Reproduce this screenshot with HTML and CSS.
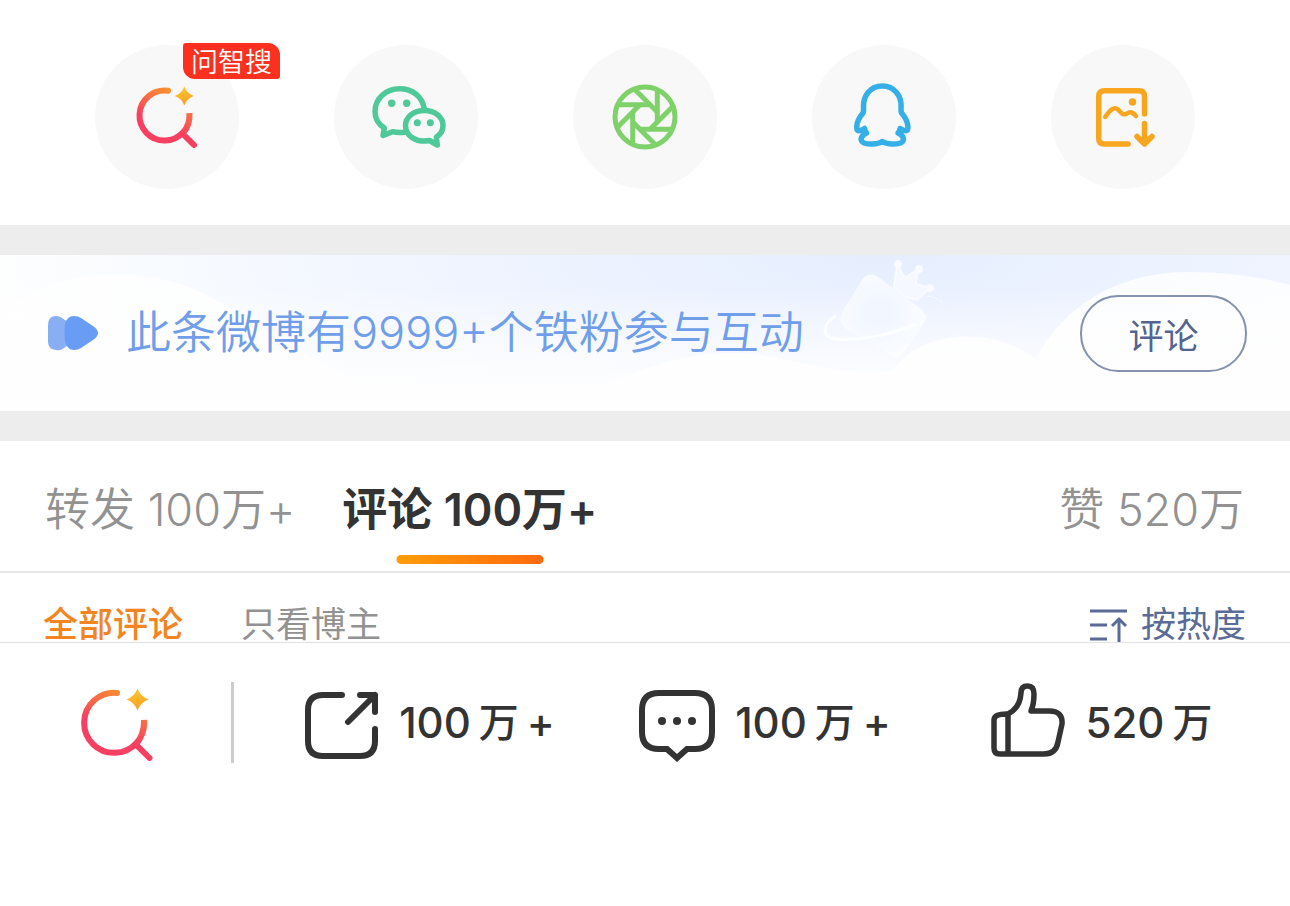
FILE: index.html
```html
<!DOCTYPE html>
<html lang="zh-CN">
<head>
<meta charset="utf-8">
<meta name="viewport" content="width=device-width, initial-scale=1">
<title>微博评论</title>
<link rel="stylesheet" href="styles.css">
</head>
<body>
<nav class="share" aria-label="分享">
  <button class="share-item" aria-label="问智搜">
    <svg viewBox="0 0 144 144" fill="none" stroke-width="6" stroke-linecap="round">
      <defs>
        <linearGradient id="ring" gradientUnits="userSpaceOnUse" x1="88" y1="46" x2="72" y2="82"><stop offset="0" stop-color="#fb9a2b"/><stop offset="1" stop-color="#f73f62"/></linearGradient>
        <linearGradient id="star" x1="0.3" y1="0" x2="0.6" y2="1"><stop offset="0" stop-color="#fcc92f"/><stop offset="1" stop-color="#f99d22"/></linearGradient>
      </defs>
      <path stroke="url(#ring)" d="M73 45.8A25 25 0 1 0 94.4 68.2C94.9 77 92.500 83.500 87.500 88.500L99 100"/>
      <path fill="url(#star)" d="M89.300 41.500Q91.800 48.500 98.800 51Q91.800 53.500 89.300 60.500Q86.800 53.500 79.800 51Q86.800 48.500 89.300 41.500Z"/>
    </svg>
    <span class="badge">问智搜</span>
  </button>
  <button class="share-item" aria-label="微信">
    <svg viewBox="0 0 144 144" fill="none" stroke="#4fc99a" stroke-width="5.500" stroke-linejoin="round" stroke-linecap="round">
      <path d="M71 87.200Q64 88.200 58.500 86.700L49 90.500L50.300 82.800C44 79 41 73 41 66.500C41 53.500 52 43.800 65.800 43.800C78.500 43.800 88 51.500 90.300 63.500"/>
      <path d="M90.300 65.500C101 65.500 109 72 109 80.500C109 85.500 106.500 89.500 102.300 92L103.300 100L95.500 95.500C82 98 71.500 91 71.500 80.500C71.500 72 79.500 65.500 90.300 65.500Z"/>
      <g fill="#4fc99a" stroke="none"><circle cx="57.700" cy="58.300" r="3.700"/><circle cx="72.700" cy="58.300" r="3.700"/><circle cx="83.300" cy="77.700" r="3.500"/><circle cx="96.300" cy="77.700" r="3.500"/></g>
    </svg>
  </button>
  <button class="share-item" aria-label="朋友圈">
    <svg viewBox="-72 -72 144 144" fill="none" stroke="#7fd169" stroke-width="5">
      <circle r="30"/>
      <path d="M-27-12.300H5.100"/><path d="M-27-12.300H5.100" transform="rotate(45)"/><path d="M-27-12.300H5.100" transform="rotate(90)"/><path d="M-27-12.300H5.100" transform="rotate(135)"/><path d="M-27-12.300H5.100" transform="rotate(180)"/><path d="M-27-12.300H5.100" transform="rotate(225)"/><path d="M-27-12.300H5.100" transform="rotate(270)"/><path d="M-27-12.300H5.100" transform="rotate(315)"/>
    </svg>
  </button>
  <button class="share-item" aria-label="QQ">
    <svg viewBox="0 0 144 144" fill="none" stroke="#35afe8" stroke-width="5.500" stroke-linejoin="round">
      <path d="M70.300 41C58 41 51.500 51 51.500 61C51.500 64 52 66 51 68C48 71.500 44.700 76 44.700 82C44.700 87 48 86.500 52.500 83.500Q53 86.500 54.500 88C49 90.500 48 94.500 50.500 97C54 100 66 99.500 70.300 96.500C74.600 99.500 86.600 100 90.100 97C92.600 94.500 91.600 90.500 86.100 88Q87.600 86.500 88.100 83.500C92.600 86.500 95.900 87 95.900 82C95.900 76 92.600 71.500 89.600 68C88.600 66 89.100 64 89.100 61C89.100 51 82.600 41 70.300 41Z"/>
    </svg>
  </button>
  <button class="share-item" aria-label="生成图片">
    <svg viewBox="0 0 144 144" fill="none" stroke="#f8a51f" stroke-width="5.500" stroke-linecap="round" stroke-linejoin="round">
      <path d="M93.500 69V51.500Q93.500 45.700 88 45.700H53.500Q47.700 45.700 47.700 51.500V93.200Q47.700 99 53.500 99H77"/>
      <path stroke-width="4.500" d="M54.200 72C59 65 63 61 67 64.500C71 69 72.500 70.500 76 68.500C79.500 66 82 67.500 85 71"/>
      <circle cx="81.500" cy="57" r="3.700" fill="#f8a51f" stroke="none"/>
      <path d="M93.500 78.500V98.500M86 91.500L93.500 99L101 91.500"/>
    </svg>
  </button>
</nav>

<section class="banner">
  <svg class="banner-art" viewBox="0 0 1290 156" preserveAspectRatio="xMidYMid slice" aria-hidden="true">
    <defs>
      <linearGradient id="cloud" gradientUnits="userSpaceOnUse" x1="0" y1="17" x2="0" y2="150"><stop offset="0" stop-color="#fff" stop-opacity="0.800"/><stop offset="1" stop-color="#fefefe"/></linearGradient>
      <radialGradient id="gem" cx="0.450" cy="0.450" r="0.550"><stop offset="0" stop-color="#f0f5ff"/><stop offset="0.500" stop-color="#f4f8ff"/><stop offset="1" stop-color="#fbfdff"/></radialGradient>
    </defs>
    <path fill="url(#cloud)" d="M0 60C50 12 150 8 210 42C280 82 350 130 420 156H0Z"/>
    <path fill="url(#cloud)" d="M560 156C620 118 680 98 730 98C790 98 820 122 892 116C925 70 1000 74 1036 104C1070 40 1130 17 1190 17C1230 17 1265 23 1290 30V156Z"/>
    <g stroke="#f8fbff" stroke-linejoin="round">
      <path fill="#f5f8ff" stroke-width="2" d="M894 32L897 9L905 23L918 14L916 29L930 33L917 45L906 42Z"/>
      <g fill="#f9fbff" stroke="none"><circle cx="898" cy="9" r="4"/><circle cx="919" cy="14" r="4"/><circle cx="930" cy="33" r="4"/></g>
      <path fill="url(#gem)" stroke="none" d="M862 25Q869 16 878 22L921 54Q929 60 924 68L904 97Q898 106 889 99L846 74Q837 67 842 57Z"/>
      <path fill="none" stroke="#fdfeff" stroke-width="3" d="M836 61C823 67 821 83 835 84C860 86 890 80 916 69"/>
      <path fill="none" stroke-width="1" d="M927 41Q940 42 943 50"/>
    </g>
  </svg>
  <svg class="fan-icon" viewBox="0 0 52 36" aria-hidden="true">
    <path fill="#8aaef4" d="M1 10Q1 1 9 1Q13 1 18 5L27 11V26L17 33Q13 36 9 35Q1 34 1 27Z"/>
    <path fill="#699cf5" d="M18 9Q20 1 27 1Q31 1 34 3L46 11Q56 18 46 25L34 33Q31 35 27 35Q20 35 18 26Q17 18 18 9Z"/>
  </svg>
  <p class="banner-text">此条微博有9999+个铁粉参与互动</p>
  <button class="comment-button">评论</button>
</section>

<nav class="tabs" aria-label="互动">
  <button class="tab">转发 100万+</button>
  <button class="tab tab-active">评论 100万+</button>
  <button class="tab tab-likes">赞 520万</button>
</nav>

<div class="filters">
  <button class="filter filter-active">全部评论</button>
  <button class="filter">只看博主</button>
  <button class="filter filter-sort">
    <svg class="sort-icon" viewBox="0 0 38 36" fill="none" stroke="#5a6b97" stroke-width="3" aria-hidden="true"><path d="M0 4H37M0 18H17M0 32H17M29 35V11M22 19L29 12L36 19"/></svg>
    按热度
  </button>
</div>

<footer class="toolbar">
  <button class="search" aria-label="智搜">
    <svg class="search-icon" viewBox="0 0 74 76" fill="none" stroke-width="6" stroke-linecap="round">
      <defs><linearGradient id="ring-large" gradientUnits="userSpaceOnUse" x1="56" y1="6" x2="36" y2="48"><stop offset="0" stop-color="#fb9a2b"/><stop offset="1" stop-color="#f73f62"/></linearGradient></defs>
      <path stroke="url(#ring-large)" d="M38 8A30 30 0 1 0 65 35Q65.500 49 57 59.500L70.500 73"/>
      <path fill="url(#star)" d="M58.500 3.500Q61.500 11.500 69.500 14.500Q61.500 17.500 58.500 25.500Q55.500 17.500 47.500 14.500Q55.500 11.500 58.500 3.500Z"/>
    </svg>
  </button>
  <div class="actions">
    <button class="action">
      <svg class="action-icon" viewBox="0 0 76 80" fill="none" stroke="#333" stroke-width="6" stroke-linecap="round" stroke-linejoin="round" aria-hidden="true"><path d="M39 12H20Q5 12 5 27V58Q5 73 20 73H57Q72 73 72 58V46M57 12H72V29M72 12L45 39"/></svg>
      <span class="count"><span>100</span><span class="unit">万</span><span>+</span></span>
    </button>
    <button class="action">
      <svg class="action-icon" viewBox="0 0 76 80" fill="none" stroke="#333" stroke-width="6" aria-hidden="true"><path d="M20 10H56Q73 10 73 27V49Q73 66 56 66H48L38 75L28 66H20Q3 66 3 49V27Q3 10 20 10Z"/><g fill="#333" stroke="none"><circle cx="23" cy="38" r="4"/><circle cx="38" cy="38" r="4"/><circle cx="53" cy="38" r="4"/></g></svg>
      <span class="count"><span>100</span><span class="unit">万</span><span>+</span></span>
    </button>
    <button class="action">
      <svg class="action-icon" viewBox="0 0 76 80" fill="none" stroke="#333" stroke-width="5.500" stroke-linejoin="round" aria-hidden="true"><path d="M18 31Q4 30.500 4 37V65Q4 71 10 71H54Q66 71 68 59L72 41Q73 28 59 28H41Q44 21 44 11Q44 3 37.500 3Q31 3 31 10Q30 25 18 31ZM18 31V71"/></svg>
      <span class="count"><span>520</span><span class="unit">万</span></span>
    </button>
  </div>
</footer>
</body>
</html>
```
FILE: styles.css
```css
* {
  box-sizing: border-box;
}

body {
  margin: 0;
  background: #fff;
  color: #333;
  font-family: Inter, "Noto Sans CJK SC", sans-serif;
}

button {
  padding: 0;
  border: 0;
  background: none;
  color: inherit;
  font: inherit;
  white-space: nowrap;
  cursor: pointer;
}

svg {
  display: block;
  flex: none;
}

.share {
  display: flex;
  justify-content: space-between;
  padding: 45px 95px 36px;
}

.share-item {
  position: relative;
  width: 144px;
  height: 144px;
  border-radius: 50%;
  background: #f8f8f8;
}

.badge {
  position: absolute;
  top: -2px;
  left: 88px;
  padding: 0 8px;
  border-radius: 3px 12px 3px 12px;
  background: #fc301e;
  color: #fff;
  font-family: "Noto Sans CJK SC", sans-serif;
  font-size: 27px;
  font-weight: 350;
  line-height: 36px;
}

.banner {
  position: relative;
  display: flex;
  align-items: center;
  min-height: 216px;
  padding: 0 43px 0 47px;
  border: solid #ededed;
  border-width: 30px 0;
  background: linear-gradient(transparent 20%, #fefefe 90%), radial-gradient(ellipse 70% 160% at 68% 0, #e6eefe, #eff4ff 45%, #f8fbff 80%, #fefefe 100%);
}

.banner-art {
  position: absolute;
  inset: 0;
  width: 100%;
  height: 100%;
}

.fan-icon {
  position: relative;
  width: 52px;
  height: 36px;
}

.banner-text {
  position: relative;
  margin: 0 auto 0 27px;
  color: #709ee9;
  font-size: 45px;
  font-weight: 350;
  line-height: 60px;
  white-space: nowrap;
}

.comment-button {
  position: relative;
  width: 167px;
  height: 77px;
  border: 2px solid #8591af;
  border-radius: 38px;
  color: #53658f;
  font-size: 35px;
}

.tabs {
  display: flex;
  gap: 47px;
  padding: 0 46px 0 45px;
  border-bottom: 2px solid #e6e6e6;
}

.tab {
  position: relative;
  height: 130px;
  color: #929292;
  font-size: 45px;
  font-weight: 350;
}

.tab-active {
  color: #333;
  font-weight: 600;
}

.tab-active::after {
  content: "";
  position: absolute;
  bottom: 7px;
  left: 50%;
  width: 147px;
  height: 9px;
  border-radius: 5px;
  background: linear-gradient(90deg, #ff9d0a, #ff6a0d);
  transform: translateX(-50%);
}

.tab-likes {
  margin-left: auto;
}

.filters {
  display: flex;
  align-items: flex-start;
  gap: 58px;
  padding: 34px 44px 0 43px;
  border-bottom: 1px solid #e2e2e2;
}

.filter {
  height: 35px;
  color: #929292;
  font-size: 35px;
  line-height: 35px;
}

.filter-active {
  color: #f28522;
  font-weight: 500;
}

.filter-sort {
  display: flex;
  align-items: center;
  gap: 13px;
  margin-left: auto;
  color: #5a6b97;
}

.sort-icon {
  width: 38px;
  height: 36px;
}

.toolbar {
  display: flex;
  padding-top: 39px;
}

.search {
  display: flex;
  align-items: center;
  justify-content: center;
  width: 234px;
  height: 81px;
  border-right: 3px solid #ccc;
}

.search-icon {
  width: 74px;
  height: 76px;
}

.actions {
  display: grid;
  flex: 1;
  grid-template-columns: repeat(3, 1fr);
  padding: 0 21px 0 27px;
}

.action {
  display: flex;
  align-items: center;
  justify-content: center;
  gap: 20px;
}

.action-icon {
  width: 76px;
  height: 80px;
}

.count {
  display: flex;
  align-items: center;
  gap: 8px;
  font-size: 42px;
  font-weight: 500;
  line-height: 48px;
}

.unit {
  font-size: 40px;
}
```
